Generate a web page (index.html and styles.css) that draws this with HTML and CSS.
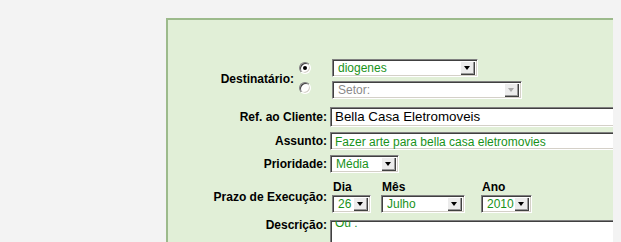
FILE: index.html
```html
<!DOCTYPE html>
<html lang="pt-BR">
<head>
    <meta charset="UTF-8">
    <title>Nova Tarefa</title>
    <link rel="stylesheet" href="styles.css">
</head>
<body>

<div class="painel">
    <div class="linha linha-dest">
        <div class="rotulo rotulo-dest">Destinatário:</div>
        <div class="radios">
            <span class="radio marcado"></span>
            <span class="radio"></span>
        </div>
        <div class="combos">
            <div class="combo combo-usuario"><span class="valor">diogenes</span><span class="seta"></span></div>
            <div class="combo combo-setor desabilitado"><span class="valor">Setor:</span><span class="seta"></span></div>
        </div>
    </div>

    <div class="linha linha-ref">
        <div class="rotulo">Ref. ao Cliente:</div>
        <div class="campo campo-grande">Bella Casa Eletromoveis</div>
    </div>

    <div class="linha linha-assunto">
        <div class="rotulo">Assunto:</div>
        <div class="campo">Fazer arte para bella casa eletromovies</div>
    </div>

    <div class="linha linha-prioridade">
        <div class="rotulo">Prioridade:</div>
        <div class="combo combo-prioridade"><span class="valor">Média</span><span class="seta"></span></div>
    </div>

    <div class="linha linha-prazo">
        <div class="rotulo">Prazo de Execução:</div>
        <div class="prazo">
            <div class="sub">Dia</div>
            <div class="sub">Mês</div>
            <div class="sub">Ano</div>
            <div class="combo combo-dia"><span class="valor">26</span><span class="seta"></span></div>
            <div class="combo combo-mes"><span class="valor">Julho</span><span class="seta"></span></div>
            <div class="combo combo-ano"><span class="valor">2010</span><span class="seta"></span></div>
        </div>
    </div>

    <div class="linha linha-descricao">
        <div class="rotulo">Descrição:</div>
        <div class="campo area"><div class="area-texto">Ou :</div></div>
    </div>
</div>

</body>
</html>
```

FILE: styles.css
```css
html {
    overflow: hidden;
    background-color: #f3f3f3;
}
body {
    margin: 8px 8px 0 8px;
    font-family: "Liberation Sans", Arial, sans-serif;
    font-size: 12px;
    color: black;
}
.painel {
    box-sizing: border-box;
    margin: 10px -8px 0 158px;
    height: 224px;
    padding-top: 39px;
    border: 2px solid #9cba8b;
    border-right: none;
    border-bottom: none;
    background-color: #e1efd7;
    overflow: hidden;
}
.linha {
    display: flex;
    align-items: center;
}
.rotulo {
    width: 159px;
    margin-right: 3px;
    text-align: right;
    font-weight: bold;
    line-height: 14px;
    flex-shrink: 0;
}
.rotulo-dest {
    width: 126px;
    margin-right: 0;
}
.radios {
    width: 36px;
    align-self: flex-start;
    display: flex;
    flex-direction: column;
    gap: 8px;
    padding: 3px 0 0 5px;
    box-sizing: border-box;
}
.radio {
    position: relative;
    width: 12px;
    height: 12px;
    box-sizing: border-box;
    border-radius: 50%;
    border: 1px solid;
    border-color: #808080 #ffffff #ffffff #808080;
    box-shadow: inset 1px 1px #404040, inset -1px -1px #d4d0c8;
    background-color: white;
}
.marcado::after {
    content: "";
    position: absolute;
    left: 3px;
    top: 3px;
    width: 4px;
    height: 4px;
    border-radius: 50%;
    background-color: black;
}
.combos {
    display: flex;
    flex-direction: column;
    gap: 4px;
    margin-left: 2px;
}
.combo {
    display: flex;
    align-items: center;
    justify-content: space-between;
    height: 18px;
    padding: 2px;
    box-sizing: border-box;
    border: 1px solid;
    border-color: #808080 #ffffff #ffffff #808080;
    box-shadow: inset 1px 1px #404040, inset -1px -1px #d4d0c8;
    background-color: white;
    color: #18921a;
    line-height: 14px;
}
.valor {
    padding-left: 3px;
    white-space: nowrap;
}
.seta {
    position: relative;
    width: 15px;
    height: 14px;
    flex-shrink: 0;
    background-color: #ececec;
    box-shadow: inset 1px 1px #ffffff, inset -1px -1px #404040, inset -2px -2px #9a9a9a;
}
.seta::after {
    content: "";
    position: absolute;
    left: 4px;
    top: 5px;
    border-left: 3.5px solid transparent;
    border-right: 3.5px solid transparent;
    border-top: 4px solid black;
}
.desabilitado {
    color: #8a8a8a;
}
.desabilitado .seta::after {
    border-top-color: #a8a8a8;
}
.combo-usuario {
    width: 146px;
}
.combo-setor {
    width: 190px;
}
.combo-prioridade {
    width: 69px;
}
.combo-dia {
    width: 39px;
}
.combo-mes {
    width: 84px;
}
.combo-ano {
    width: 51px;
}
.campo {
    flex: none;
    width: 340px;
    height: 18px;
    padding: 2px 4px;
    box-sizing: border-box;
    border: 1px solid;
    border-color: #808080 #ffffff #ffffff #808080;
    box-shadow: inset 1px 1px #404040, inset -1px -1px #d4d0c8;
    background-color: white;
    color: #18921a;
    line-height: 14px;
    white-space: nowrap;
    overflow: hidden;
}
.campo-grande {
    height: 20px;
    padding-top: 1px;
    font-size: 13.33px;
    line-height: 16px;
    color: black;
}
.linha-ref {
    margin-top: 8px;
}
.linha-assunto,
.linha-prioridade {
    margin-top: 5px;
}
.linha-prazo {
    margin-top: 7px;
}
.prazo {
    display: grid;
    grid-template-columns: 49px 100px auto;
    row-gap: 1px;
    margin-left: 2px;
}
.sub {
    font-weight: bold;
    line-height: 14px;
    padding-left: 1px;
}
.linha-descricao {
    margin-top: 7px;
    align-items: flex-start;
}
.linha-descricao .rotulo {
    margin-top: -2px;
}
.area {
    height: 40px;
    padding-top: 2px;
}
.area-texto {
    margin-top: -7px;
}
```
